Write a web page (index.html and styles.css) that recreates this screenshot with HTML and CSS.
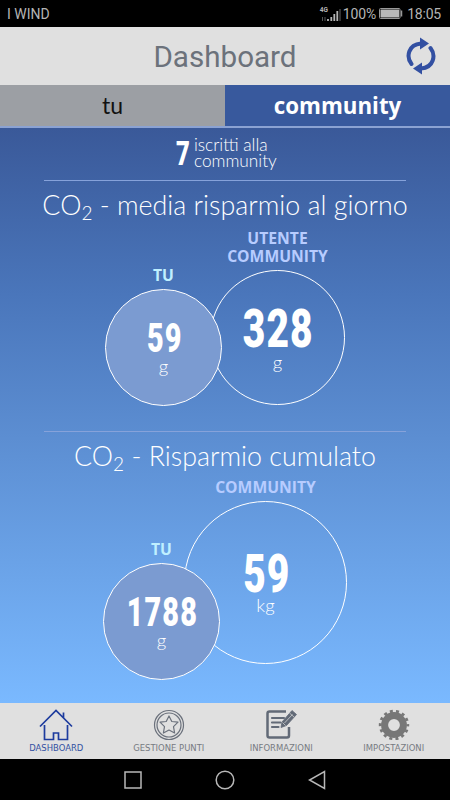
FILE: index.html
```
<!DOCTYPE html>
<html lang="it">
<head>
    <meta charset="UTF-8">
    <meta name="viewport" content="width=device-width, initial-scale=1.0">
    <title>Dashboard</title>
    <link rel="stylesheet" href="styles.css">
</head>
<body>
    <div class="status-bar">
        <span class="carrier">I WIND</span>
        <div class="status-right">
            <div class="signal">
                <span class="network">4G</span>
                <svg width="21" height="14" viewBox="0 0 21 14">
                    <path d="M2.500 9v4M5 9v4" stroke="#555" stroke-width="1"/>
                    <path d="M8 11v2M11.300 9v4M14.300 6v7M17.300 3v10" stroke="#b4b4b4" stroke-width="1.800"/>
                    <path d="M20 1v12" stroke="#444" stroke-width="1.500"/>
                </svg>
            </div>
            <span class="percent">100%</span>
            <svg class="battery" width="24" height="11" viewBox="0 0 24 11">
                <rect x="0.500" y="0.500" width="20.500" height="10" rx="1" fill="none" stroke="#999"/>
                <rect x="1.500" y="1.500" width="18.500" height="8" fill="#b8b8b8"/>
                <path d="M22.500 2.500v6" stroke="#999" stroke-width="1.500"/>
            </svg>
            <span class="clock">18:05</span>
        </div>
    </div>

    <header>
        <h1>Dashboard</h1>
        <svg class="refresh" width="30" height="38" viewBox="0 0 30 38">
            <g fill="none" stroke="#3350a2" stroke-width="4" stroke-linecap="round">
                <path d="M5.500 27C0 20 2 7.500 15 6.500"/>
                <path d="M24.500 11C30 18 28 30.500 15 31.500"/>
            </g>
            <path d="M14 0.500L23 6.500L14 12.500zM16 25.500L7 31.500L16 37.500z" fill="#3350a2"/>
        </svg>
    </header>

    <div class="tabs">
        <a class="tab" href="#">tu</a>
        <a class="tab active" href="#">community</a>
    </div>

    <main>
        <div class="members">
            <span class="members-number">7</span>
            <span class="members-text">iscritti alla<br>community</span>
        </div>

        <section class="daily">
            <h2>CO<sub>2</sub> - media risparmio al giorno</h2>
            <div class="circles">
                <div class="column mine">
                    <h3>TU</h3>
                    <div class="circle"><b>59</b><span>g</span></div>
                </div>
                <div class="column others">
                    <h3>UTENTE<br>COMMUNITY</h3>
                    <div class="circle"><b>328</b><span>g</span></div>
                </div>
            </div>
        </section>

        <section class="total">
            <h2>CO<sub>2</sub> - Risparmio cumulato</h2>
            <div class="circles">
                <div class="column mine">
                    <h3>TU</h3>
                    <div class="circle"><b>1788</b><span>g</span></div>
                </div>
                <div class="column others">
                    <h3>COMMUNITY</h3>
                    <div class="circle"><b>59</b><span>kg</span></div>
                </div>
            </div>
        </section>
    </main>

    <nav>
        <a class="current" href="#">
            <svg width="34" height="32" viewBox="0 0 34 32" fill="none" stroke="#1e3c9e" stroke-width="1.700">
                <path d="M1 17.500L17 1.500L33 17.500M24.500 3.500V9M5.500 16v14.500H14.500V24H19.500V30.500H28.500V16"/>
            </svg>
            <span>DASHBOARD</span>
        </a>
        <a href="#">
            <svg width="34" height="32" viewBox="0 0 34 32" fill="none" stroke="#6b717c" stroke-width="1.200">
                <circle cx="17" cy="16" r="14.500"/>
                <circle cx="17" cy="16" r="12"/>
                <path d="M17 7L19.800 12.500L26 13.200L21.500 17.700L22.600 24L17 21L11.400 24L12.500 17.700L8 13.200L14.200 12.500z" stroke-linejoin="round"/>
            </svg>
            <span>GESTIONE PUNTI</span>
        </a>
        <a href="#">
            <svg width="34" height="32" viewBox="0 0 34 32" fill="none" stroke="#626a77">
                <path d="M22 2.500H5.500Q3.500 2.500 3.500 4.500V26.500Q3.500 28.500 5.500 28.500H23Q25 28.500 25 26.500V18" stroke-width="2.500"/>
                <path d="M8 9H20M8 13.500H16.500M8 18H14.500" stroke-width="2.200" stroke-linecap="round"/>
                <path d="M18 13L28 1.500L32.500 5.500L22.500 16.500L17 18.500z" fill="#626a77" stroke-width="0.800"/>
                <path d="M20.500 14L28.500 5.500M25.500 4L30 8M18.500 13.500L21.500 16.500" stroke="#e0e0e0" stroke-width="0.700"/>
            </svg>
            <span>INFORMAZIONI</span>
        </a>
        <a href="#">
            <svg width="34" height="32" viewBox="0 0 34 32" fill="none" stroke="#777">
                <circle cx="17" cy="16" r="9.400" stroke-width="7"/>
                <circle cx="17" cy="16" r="13.800" stroke-width="2.800" stroke-dasharray="3 3.193" stroke-dashoffset="1.500"/>
            </svg>
            <span>IMPOSTAZIONI</span>
        </a>
    </nav>

    <div class="android-keys">
        <svg width="18" height="18" viewBox="0 0 18 18"><rect x="1" y="1" width="16" height="16"/></svg>
        <svg width="20" height="20" viewBox="0 0 20 20"><circle cx="10" cy="10" r="8.800"/></svg>
        <svg width="18" height="20" viewBox="0 0 18 20"><path d="M16.500 1.500V18.500L1.500 10z"/></svg>
    </div>
</body>
</html>
```
FILE: styles.css
```
* {
    box-sizing: border-box;
}

body {
    margin: 0;
    width: 450px;
    height: 800px;
    display: flex;
    flex-direction: column;
    overflow: hidden;
    background-color: #000;
    font-family: Roboto, "Liberation Sans", sans-serif;
}

a {
    text-decoration: none;
}

.status-bar {
    height: 27px;
    padding: 0 9px 0 7px;
    display: flex;
    justify-content: space-between;
    align-items: center;
    color: #b4b4b4;
    font-size: 14px;
}

.status-right {
    display: flex;
    align-items: center;
}

.signal {
    position: relative;
    height: 14px;
    margin-right: 2px;
}

.signal svg {
    display: block;
    margin-top: 1px;
}

.network {
    position: absolute;
    left: 0;
    top: 0;
    font-size: 6.500px;
    line-height: 7px;
    font-weight: bold;
}

.percent {
    letter-spacing: -0.100px;
}

.battery {
    margin: 0 4px 0 3px;
}

.clock {
    letter-spacing: -0.200px;
}

header {
    height: 58px;
    position: relative;
    display: flex;
    justify-content: center;
    align-items: center;
    background-color: #e0e0e0;
}

h1 {
    margin: 2px 0 0;
    font-size: 29.600px;
    font-weight: normal;
    color: #6c727b;
}

.refresh {
    position: absolute;
    right: 14px;
    top: 10px;
}

.tabs {
    height: 43px;
    display: flex;
    border-bottom: 2px solid #8ba2d2;
}

.tab {
    flex: 1;
    line-height: 41px;
    text-align: center;
    font-family: Lato, sans-serif;
    font-size: 23px;
    color: #111;
    background-color: #9c9fa4;
}

.tab.active {
    font-family: "Open Sans", sans-serif;
    font-weight: 700;
    font-size: 22.300px;
    color: #fff;
    background-color: #38599d;
}

main {
    height: 575px;
    padding: 0 44px;
    color: #fff;
    background: linear-gradient(#3a5999, #4a76bb 29%, #5c8ed2 54%, #7ab9ff);
}

.members {
    height: 52px;
    padding-top: 9px;
    display: flex;
    justify-content: center;
    gap: 1px;
}

.members-number {
    font-size: 34px;
    line-height: 33px;
    font-weight: 900;
    transform: scaleX(0.7);
}

.members-text {
    font-family: Lato, sans-serif;
    font-size: 17.300px;
    line-height: 16px;
    font-weight: 300;
}

section {
    border-top: 1px solid #86a2da;
}

.daily {
    height: 251px;
}

h2 {
    margin: 0 -20px;
    height: 50px;
    line-height: 48px;
    text-align: center;
    white-space: nowrap;
    font-family: Lato, sans-serif;
    font-weight: 300;
    font-size: 26.850px;
}

sub {
    font-size: 19px;
    line-height: 0;
    vertical-align: -5px;
}

.circles {
    display: flex;
}

.column {
    display: flex;
    flex-direction: column;
    align-items: center;
}

.mine {
    z-index: 1;
}

h3 {
    margin: 0 0 5px;
    font-family: "Open Sans", sans-serif;
    font-size: 15.700px;
    line-height: 18px;
    font-weight: 700;
    text-align: center;
    color: #b7ccff;
}

.mine h3 {
    color: #bfefff;
}

.circle {
    border: 1.500px solid #fff;
    border-radius: 50%;
    display: flex;
    flex-direction: column;
    align-items: center;
    justify-content: center;
}

.mine .circle {
    width: 117px;
    height: 117px;
    background-color: #7b9bd1;
}

.circle b {
    font-size: 40px;
    line-height: 36px;
    font-weight: 900;
    letter-spacing: 1.500px;
    transform: translate(1px, 2px) scaleX(0.72);
}

.others b {
    font-size: 54px;
    line-height: 48px;
}

.circle span {
    font-family: Lato, sans-serif;
    font-weight: 300;
    font-size: 18.500px;
    line-height: 22px;
}

.daily .mine {
    margin: 35px 0 0 61px;
}

.daily .others {
    margin: -2px 0 0 -12px;
}

.daily .others .circle {
    width: 135px;
    height: 135px;
}

.total .mine {
    margin: 58px 0 0 59px;
}

.total .others {
    margin: -4px 0 0 -36px;
}

.total .others .circle {
    width: 163px;
    height: 163px;
}

.total .others b {
    line-height: 44px;
}

nav {
    height: 56px;
    padding-top: 6px;
    display: flex;
    background-color: #e0e0e0;
}

nav a {
    flex: 1;
    display: flex;
    flex-direction: column;
    align-items: center;
    color: #777b82;
    font-family: "DejaVu Sans", sans-serif;
    font-size: 8.450px;
    line-height: 15px;
    white-space: nowrap;
}

nav .current {
    color: #3350a2;
}

.android-keys {
    flex: 1;
    display: flex;
    justify-content: center;
    align-items: center;
    gap: 73px;
}

.android-keys svg {
    fill: none;
    stroke: #b8b8b8;
    stroke-width: 1.500;
}
```
